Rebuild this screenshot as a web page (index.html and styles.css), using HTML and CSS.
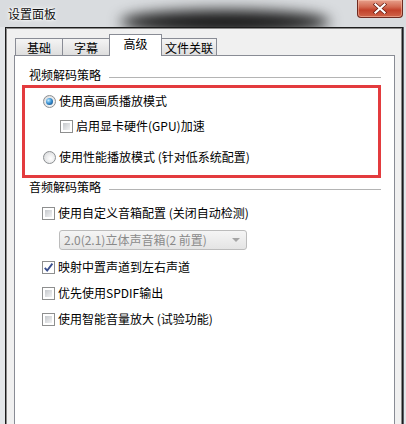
FILE: index.html
```html
<!DOCTYPE html>
<html lang="zh-CN">
<head>
    <meta charset="UTF-8">
    <title>设置面板</title>
    <link rel="stylesheet" href="styles.css">
</head>
<body>
    <div class="window">
        <!-- Title bar -->
        <div class="titlebar">
            <div class="glass"></div>
            <span class="title">设置面板</span>
            <button class="close">
                <svg width="14" height="11" viewBox="0 0 14 11">
                    <path d="M2.5 1.5 L11.5 9.5 M11.5 1.5 L2.5 9.5" stroke="#6b1d12" stroke-width="3.6" stroke-linecap="square"/>
                    <path d="M2.5 1.5 L11.5 9.5 M11.5 1.5 L2.5 9.5" stroke="#ffffff" stroke-width="2.2" stroke-linecap="square"/>
                </svg>
            </button>
        </div>

        <div class="client">
            <!-- Tabs -->
            <div class="tabs">
                <div class="tab t1">基础</div>
                <div class="tab t2">字幕</div>
                <div class="tab t3 active">高级</div>
                <div class="tab t4">文件关联</div>
            </div>

            <div class="panel">
                <div class="group-title"><span>视频解码策略</span><i class="rule"></i></div>

                <div class="highlight">
                    <label class="opt first"><span class="radio on"></span>使用高画质播放模式</label>
                    <label class="opt sub"><span class="check"></span>启用显卡硬件(GPU)加速</label>
                    <label class="opt last"><span class="radio"></span>使用性能播放模式 (针对低系统配置)</label>
                </div>

                <div class="group-title"><span>音频解码策略</span><i class="rule"></i></div>

                <div class="audio">
                    <label class="opt"><span class="check"></span>使用自定义音箱配置 (关闭自动检测)</label>
                    <div class="select">
                        <span>2.0(2.1)立体声音箱(2 前置)</span>
                        <i class="arrow"></i>
                    </div>
                    <label class="opt gap"><span class="check on">
                        <svg width="11" height="11" viewBox="0 0 11 11">
                            <path d="M1.8 5.8 L4.2 8.6 L9.4 1.6" fill="none" stroke="#3a4f8f" stroke-width="1.9"/>
                        </svg>
                    </span>映射中置声道到左右声道</label>
                    <label class="opt gap"><span class="check"></span>优先使用SPDIF输出</label>
                    <label class="opt gap"><span class="check"></span>使用智能音量放大 (试验功能)</label>
                </div>
            </div>
        </div>
    </div>
</body>
</html>
```

FILE: styles.css
```css
/* General reset */
* {
    margin: 0;
    padding: 0;
    box-sizing: border-box;
}

body {
    width: 406px;
    height: 424px;
    overflow: hidden;
    font-family: "Noto Sans CJK SC", "Liberation Sans", sans-serif;
    font-size: 12px;
    color: #000;
}

/* Window frame (aero glass) */
.window {
    height: 424px;
    display: flex;
    flex-direction: column;
    background-color: #e3e6e9;
}

.titlebar {
    position: relative;
    height: 27px;
    display: flex;
    align-items: flex-start;
    justify-content: space-between;
    background-color: #d9dcdf;
}

/* blurred dark shape behind the glass */
.glass {
    position: absolute;
    left: 120px;
    top: 10px;
    width: 210px;
    height: 24px;
    border-radius: 50%;
    background-color: #1a1a1a;
    filter: blur(7px);
}

.title {
    position: relative;
    padding: 6px 0 0 8px;
    line-height: 16px;
    font-size: 12px;
    color: #111;
    text-shadow: 0 0 6px #fff, 0 0 3px #fff, 0 0 2px #fff;
}

.close {
    position: relative;
    width: 46px;
    height: 18px;
    margin-right: 3px;
    border: 1px solid #6e2a20;
    border-top: none;
    border-radius: 0 0 4px 4px;
    background: linear-gradient(to bottom, #e7a08c 0%, #d36a52 40%, #c2412a 60%, #d0654a 100%);
    box-shadow: inset 0 0 0 1px rgba(255, 210, 190, 0.45);
    display: flex;
    align-items: center;
    justify-content: center;
}

/* Client area */
.client {
    position: relative;
    z-index: 1;
    flex: 1;
    margin: 0 3px 0 5px;
    background-color: #f0f0f0;
    border: 1px solid #1c1c1c;
    border-bottom: none;
    box-shadow: inset 1px 1px 0 #8a8a8a, inset -1px 0 0 #8a8a8a, 1px 0 0 #5a5f68;
    padding: 6px 7px 0 8px;
    display: flex;
    flex-direction: column;
}

/* Tabs */
.tabs {
    display: flex;
    align-items: flex-end;
    height: 21px;
    padding-left: 1px;
}

.tab {
    height: 17px;
    border: 1px solid #898c95;
    border-bottom: none;
    background: linear-gradient(to bottom, #f4f4f4, #dedede);
    text-align: center;
    font-size: 12px;
    line-height: 18px;
    color: #000;
}

.t1 { width: 48px; }
.t2 { width: 48px; margin-left: -1px; }
.t3 { width: 53px; margin-left: -1px; }
.t4 { width: 56px; margin-left: -1px; }

.tab.active {
    position: relative;
    z-index: 1;
    height: 22px;
    margin-bottom: -1px;
    background: #fff;
    line-height: 18px;
}

.panel {
    flex: 1;
    background-color: #fff;
    border: 1px solid #898c95;
    border-bottom: none;
    padding: 10px 13px 0 7px;
}

/* Group headings */
.group-title {
    height: 18px;
    display: flex;
    align-items: center;
    padding-left: 7px;
    line-height: 18px;
}

.group-title .rule {
    flex: 1;
    height: 1px;
    margin: 5px 0 0 8px;
    background-color: #b4b4b4;
}

/* Red highlight box */
.highlight {
    margin-top: 1px;
    border: 3px solid #e33b3e;
    padding: 4px 0 9px 18px;
}

.opt {
    height: 18px;
    display: flex;
    align-items: center;
    line-height: 18px;
    white-space: nowrap;
}

.opt.sub {
    margin-top: 7px;
    padding-left: 17px;
}

.opt.last {
    margin-top: 13px;
}

.radio, .check {
    width: 13px;
    height: 13px;
    margin-right: 3px;
    flex-shrink: 0;
    position: relative;
}

.radio {
    border-radius: 50%;
    border: 1px solid #8c8f92;
    background: radial-gradient(circle at 60% 60%, #ffffff 0%, #e7e8e9 55%, #cfd1d3 100%);
}

.radio.on::after {
    content: "";
    position: absolute;
    left: 2px;
    top: 2px;
    width: 7px;
    height: 7px;
    border-radius: 50%;
    background: radial-gradient(circle at 35% 35%, #c4ecff 0%, #3a92d4 45%, #0b3a6e 100%);
}

.check {
    border: 1px solid #8e8f8f;
    background: #fff;
}

.check::after {
    content: "";
    position: absolute;
    left: 2px;
    top: 2px;
    width: 7px;
    height: 7px;
    background: linear-gradient(135deg, #c5c8cc, #f2f3f4);
}

.check.on::after {
    display: none;
}

.check svg {
    position: absolute;
    left: 0;
    top: 0;
}

/* Audio section */
.audio {
    padding: 8px 0 0 20px;
}

.select {
    width: 188px;
    height: 20px;
    margin: 8px 0 0 17px;
    border: 1px solid #bcbcbc;
    border-radius: 3px;
    background: linear-gradient(to bottom, #f5f5f5, #e4e4e4);
    display: flex;
    align-items: center;
    justify-content: space-between;
    padding: 0 6px 0 4px;
    color: #8a8a8a;
    line-height: 18px;
}

.arrow {
    width: 0;
    height: 0;
    border-left: 4px solid transparent;
    border-right: 4px solid transparent;
    border-top: 4px solid #a5a5a5;
}

.opt.gap {
    margin-top: 8px;
}
```
